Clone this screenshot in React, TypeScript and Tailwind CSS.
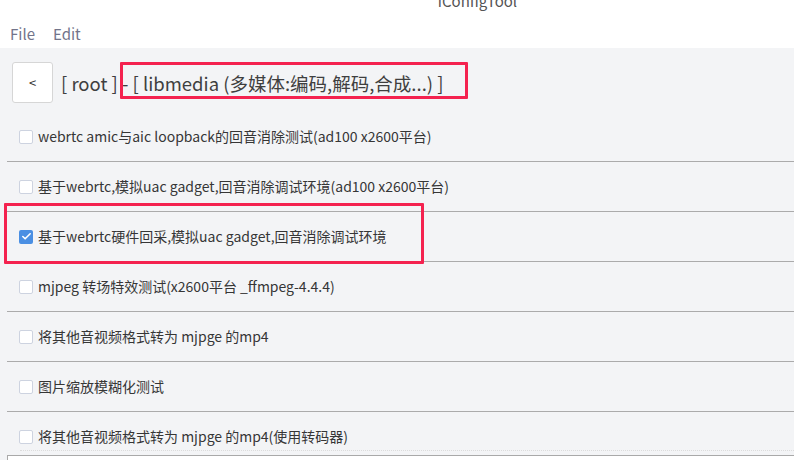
import { Check } from "lucide-react";

interface Item {
  label: string;
  checked?: boolean;
}

const ITEMS: Item[] = [
  { label: "webrtc amic与aic loopback的回音消除测试(ad100 x2600平台)" },
  { label: "基于webrtc,模拟uac gadget,回音消除调试环境(ad100 x2600平台)" },
  { label: "基于webrtc硬件回采,模拟uac gadget,回音消除调试环境", checked: true },
  { label: "mjpeg 转场特效测试(x2600平台 _ffmpeg-4.4.4)" },
  { label: "将其他音视频格式转为 mjpge 的mp4" },
  { label: "图片缩放模糊化测试" },
  { label: "将其他音视频格式转为 mjpge 的mp4(使用转码器)" },
];

function Checkbox({ checked }: { checked?: boolean }) {
  if (checked) {
    return (
      <span className="flex h-[14px] w-[14px] shrink-0 items-center justify-center rounded-[2px] bg-[#4a8fe3]">
        <Check className="h-[11px] w-[11px] text-white" strokeWidth={3.5} />
      </span>
    );
  }
  return (
    <span className="h-[14px] w-[14px] shrink-0 rounded-[2px] border border-[#cdd3e0] bg-white" />
  );
}

export default function App() {
  return (
    <div className="relative h-[460px] w-[794px] overflow-hidden bg-white font-['Noto_Sans_CJK_SC',sans-serif]">
      {/* window title, mostly scrolled off the top */}
      <div className="flex h-[8px] items-end justify-center pl-[161px]">
        <span className="text-[15px] leading-[15px] text-[#555]">iConfigTool</span>
      </div>

      {/* menu bar */}
      <div className="flex h-[40px] items-center gap-[18px] pl-[10px] pt-[13px] text-[15px] text-[#72748a]">
        <span>File</span>
        <span>Edit</span>
      </div>

      <div className="h-[412px] bg-[#f3f4f6]">
        {/* breadcrumb header */}
        <div className="flex h-[64px] items-start gap-[8px] pl-[12px] pt-[14px]">
          <button className="flex h-[41px] w-[41px] items-center justify-center rounded-[3px] border border-[#d6d6d6] bg-white text-[13px] text-[#333]">
            &lt;
          </button>
          <span className="mt-[8px] whitespace-nowrap text-[18.5px] leading-[26px] text-[#3f3f3f]">
            [ root ] - [ libmedia (多媒体:编码,解码,合成...) ]
          </span>
        </div>

        {/* option list */}
        <div className="ml-[7px]">
          {ITEMS.map((item, i) => (
            <div
              key={i}
              className="flex h-[50px] items-center gap-[5px] border-b border-[#ababab] pl-[12px] text-[14px] text-[#363636]"
            >
              <Checkbox checked={item.checked} />
              <span className="whitespace-nowrap">{item.label}</span>
            </div>
          ))}
        </div>
      </div>

      {/* highlight outlines */}
      <div className="pointer-events-none absolute left-[120px] top-[62px] h-[37px] w-[348px] rounded-[1px] border-[3px] border-[#f4224f]" />
      <div className="pointer-events-none absolute left-[4px] top-[203px] h-[61px] w-[420px] rounded-[1px] border-[3px] border-[#f4224f]" />

      {/* next panel peeking in at the bottom */}
      <div className="absolute left-[20px] right-0 top-[450px] border-t border-dotted border-[#dcdcdc]" />
      <div className="absolute left-[7px] right-0 top-[455px] h-[10px] border-l border-t border-[#a9a9a9] bg-white" />
    </div>
  );
}
